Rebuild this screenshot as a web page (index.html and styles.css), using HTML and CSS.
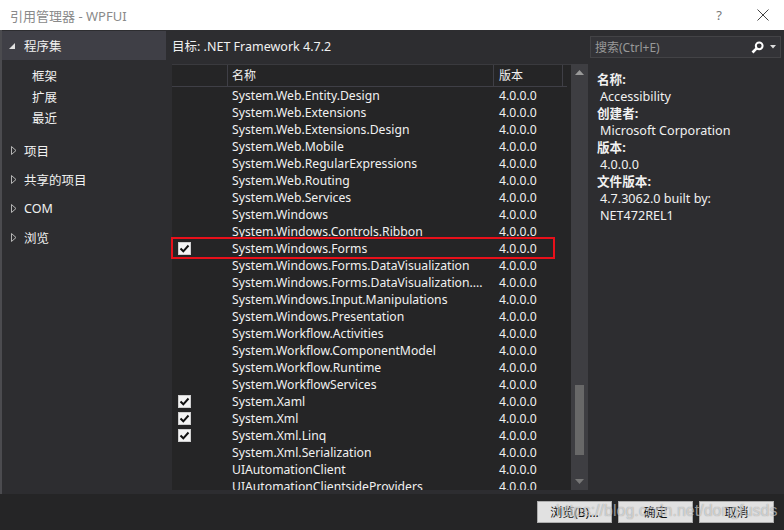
FILE: index.html
```html
<!DOCTYPE html>
<html>
<head>
<meta charset="utf-8">
<title>引用管理器 - WPFUI</title>
<link rel="stylesheet" href="styles.css">
</head>
<body>
<div class="window">

 <div class="titlebar">
  <span class="title">引用管理器 - WPFUI</span>
  <span class="help">?</span>
  <svg class="close" width="12" height="12" viewBox="0 0 12 12"><path d="M0.5 0.5L11.5 11.5M11.5 0.5L0.5 11.5" stroke="#444" stroke-width="1"/></svg>
 </div>

 <div class="main">
  <div class="nav">
   <div class="navhead"><svg class="tri-open" width="6" height="6" viewBox="0 0 6 6"><polygon points="6,0 6,6 0,6" fill="#e0e0e0"/></svg>程序集</div>
   <div class="sub first">框架</div>
   <div class="sub">扩展</div>
   <div class="sub">最近</div>
   <div class="group gfirst"><svg class="tri" width="6" height="9" viewBox="0 0 6 9"><polygon points="0.5,0.5 5,4.5 0.5,8.5" fill="none" stroke="#b4b4b4"/></svg>项目</div>
   <div class="group"><svg class="tri" width="6" height="9" viewBox="0 0 6 9"><polygon points="0.5,0.5 5,4.5 0.5,8.5" fill="none" stroke="#b4b4b4"/></svg>共享的项目</div>
   <div class="group"><svg class="tri" width="6" height="9" viewBox="0 0 6 9"><polygon points="0.5,0.5 5,4.5 0.5,8.5" fill="none" stroke="#b4b4b4"/></svg>COM</div>
   <div class="group"><svg class="tri" width="6" height="9" viewBox="0 0 6 9"><polygon points="0.5,0.5 5,4.5 0.5,8.5" fill="none" stroke="#b4b4b4"/></svg>浏览</div>
  </div>

  <div class="center">
   <div class="target">目标: .NET Framework 4.7.2</div>
   <div class="listbox">
    <div class="list">
     <div class="head">
      <span class="c-chk"></span>
      <span class="c-name">名称</span>
      <span class="c-ver">版本</span>
     </div>
     <div class="rows">
      <div class="row"><span class="c-chk"></span><span class="c-name">System.Web.Entity.Design</span><span class="c-ver">4.0.0.0</span></div>
      <div class="row"><span class="c-chk"></span><span class="c-name">System.Web.Extensions</span><span class="c-ver">4.0.0.0</span></div>
      <div class="row"><span class="c-chk"></span><span class="c-name">System.Web.Extensions.Design</span><span class="c-ver">4.0.0.0</span></div>
      <div class="row"><span class="c-chk"></span><span class="c-name">System.Web.Mobile</span><span class="c-ver">4.0.0.0</span></div>
      <div class="row"><span class="c-chk"></span><span class="c-name">System.Web.RegularExpressions</span><span class="c-ver">4.0.0.0</span></div>
      <div class="row"><span class="c-chk"></span><span class="c-name">System.Web.Routing</span><span class="c-ver">4.0.0.0</span></div>
      <div class="row"><span class="c-chk"></span><span class="c-name">System.Web.Services</span><span class="c-ver">4.0.0.0</span></div>
      <div class="row"><span class="c-chk"></span><span class="c-name">System.Windows</span><span class="c-ver">4.0.0.0</span></div>
      <div class="row"><span class="c-chk"></span><span class="c-name">System.Windows.Controls.Ribbon</span><span class="c-ver">4.0.0.0</span></div>
      <div class="row"><span class="c-chk"><span class="box"><svg width="11" height="11" viewBox="0 0 11 11"><path d="M1.5 5.5L4.3 8.3L9.5 2.5" fill="none" stroke="#111" stroke-width="2"/></svg></span></span><span class="c-name">System.Windows.Forms</span><span class="c-ver">4.0.0.0</span></div>
      <div class="row"><span class="c-chk"></span><span class="c-name">System.Windows.Forms.DataVisualization</span><span class="c-ver">4.0.0.0</span></div>
      <div class="row"><span class="c-chk"></span><span class="c-name">System.Windows.Forms.DataVisualization....</span><span class="c-ver">4.0.0.0</span></div>
      <div class="row"><span class="c-chk"></span><span class="c-name">System.Windows.Input.Manipulations</span><span class="c-ver">4.0.0.0</span></div>
      <div class="row"><span class="c-chk"></span><span class="c-name">System.Windows.Presentation</span><span class="c-ver">4.0.0.0</span></div>
      <div class="row"><span class="c-chk"></span><span class="c-name">System.Workflow.Activities</span><span class="c-ver">4.0.0.0</span></div>
      <div class="row"><span class="c-chk"></span><span class="c-name">System.Workflow.ComponentModel</span><span class="c-ver">4.0.0.0</span></div>
      <div class="row"><span class="c-chk"></span><span class="c-name">System.Workflow.Runtime</span><span class="c-ver">4.0.0.0</span></div>
      <div class="row"><span class="c-chk"></span><span class="c-name">System.WorkflowServices</span><span class="c-ver">4.0.0.0</span></div>
      <div class="row"><span class="c-chk"><span class="box"><svg width="11" height="11" viewBox="0 0 11 11"><path d="M1.5 5.5L4.3 8.3L9.5 2.5" fill="none" stroke="#111" stroke-width="2"/></svg></span></span><span class="c-name">System.Xaml</span><span class="c-ver">4.0.0.0</span></div>
      <div class="row"><span class="c-chk"><span class="box"><svg width="11" height="11" viewBox="0 0 11 11"><path d="M1.5 5.5L4.3 8.3L9.5 2.5" fill="none" stroke="#111" stroke-width="2"/></svg></span></span><span class="c-name">System.Xml</span><span class="c-ver">4.0.0.0</span></div>
      <div class="row"><span class="c-chk"><span class="box"><svg width="11" height="11" viewBox="0 0 11 11"><path d="M1.5 5.5L4.3 8.3L9.5 2.5" fill="none" stroke="#111" stroke-width="2"/></svg></span></span><span class="c-name">System.Xml.Linq</span><span class="c-ver">4.0.0.0</span></div>
      <div class="row"><span class="c-chk"></span><span class="c-name">System.Xml.Serialization</span><span class="c-ver">4.0.0.0</span></div>
      <div class="row"><span class="c-chk"></span><span class="c-name">UIAutomationClient</span><span class="c-ver">4.0.0.0</span></div>
      <div class="row"><span class="c-chk"></span><span class="c-name">UIAutomationClientsideProviders</span><span class="c-ver">4.0.0.0</span></div>
     </div>
     <div class="mark"></div>
    </div>
    <div class="scroll">
     <div class="arrow"><svg width="9" height="5" viewBox="0 0 9 5"><polygon points="0,5 4.5,0 9,5" fill="#999"/></svg></div>
     <div class="track"><div class="thumb"></div></div>
     <div class="arrow"><svg width="9" height="5" viewBox="0 0 9 5"><polygon points="0,0 4.5,5 9,0" fill="#777"/></svg></div>
    </div>
   </div>
  </div>

  <div class="side">
   <div class="search">
    <span class="hint">搜索(Ctrl+E)</span>
    <svg class="lens" width="13" height="13" viewBox="0 0 13 13"><circle cx="8.2" cy="4.8" r="3.4" fill="none" stroke="#fff" stroke-width="2"/><path d="M5.8 7.2L1.5 11.5" stroke="#fff" stroke-width="2.6"/></svg>
    <svg class="drop" width="6" height="4" viewBox="0 0 6 4"><polygon points="0,0 6,0 3,3.5" fill="#ddd"/></svg>
   </div>
   <dl class="info">
    <dt>名称:</dt><dd>Accessibility</dd>
    <dt>创建者:</dt><dd>Microsoft Corporation</dd>
    <dt>版本:</dt><dd>4.0.0.0</dd>
    <dt>文件版本:</dt><dd>4.7.3062.0 built by:</dd>
    <dd>NET472REL1</dd>
   </dl>
  </div>
 </div>

 <div class="footer">
  <button class="btn">浏览(B)...</button>
  <button class="btn">确定</button>
  <button class="btn">取消</button>
  <span class="watermark">https://blog.csdn.net/dongfusds</span>
 </div>

</div>
</body>
</html>
```

FILE: styles.css
```css
body {
 margin:0;
 background:#252526;
 font-family:"Noto Sans","Noto Sans CJK SC",sans-serif;
 font-size:12px;
 color:#f1f1f1;
}
.window {
 width:784px;
 height:530px;
 overflow:hidden;
}
.titlebar {
 height:30px;
 background:#fff;
 display:flex;
 align-items:center;
}
.title {
 padding-left:10px;
 color:#8a8a8a;
 font-size:13px;
}
.help {
 margin-left:auto;
 margin-right:35px;
 color:#777;
 font-size:13px;
}
.close {
 margin-right:15px;
}
.main {
 height:464px;
 display:flex;
 background:#2d2d30;
 border-left:2px solid #4b4b4f;
}
.nav {
 width:164px;
 font-size:12.5px;
}
.navhead {
 height:29px;
 margin-top:1px;
 background:#3f3f46;
 display:flex;
 align-items:center;
 padding-left:7px;
}
.tri-open {
 margin-right:9px;
 margin-top:1px;
}
.sub {
 padding-left:30px;
 line-height:21px;
}
.sub.first {
 margin-top:6px;
}
.group {
 display:flex;
 align-items:center;
 height:29px;
 padding-left:9px;
}
.group.gfirst {
 margin-top:7px;
}
.tri {
 margin-right:7px;
}
.center {
 width:416px;
 padding-left:6px;
 display:flex;
 flex-direction:column;
}
.target {
 height:34px;
 line-height:34px;
 font-size:12.5px;
}
.listbox {
 height:426px;
 display:flex;
}
.list {
 flex:1;
 position:relative;
 background:#252526;
 border-top:1px solid #3a3a3e;
}
.head {
 display:flex;
 height:21px;
 line-height:21px;
 border-bottom:1px solid #3f3f46;
 margin-right:4px;
}
.head span {
 border-right:1px solid #3f3f46;
}
.c-chk {
 width:56px;
 flex:none;
 box-sizing:border-box;
 padding-left:6px;
 display:flex;
 align-items:center;
}
.c-name {
 width:266px;
 flex:none;
 box-sizing:border-box;
 padding-left:4px;
 white-space:nowrap;
 overflow:hidden;
}
.c-ver {
 width:69px;
 flex:none;
 box-sizing:border-box;
 padding-left:5px;
}
.rows {
 height:403px;
 overflow:hidden;
 font-size:12.2px;
}
.row {
 display:flex;
 height:17px;
 line-height:17px;
}
.box {
 width:13px;
 height:13px;
 box-sizing:border-box;
 background:#f4f4f4;
 border:1px solid #cfcfcf;
 display:flex;
 align-items:center;
 justify-content:center;
}
.mark {
 position:absolute;
 left:-1px;
 top:172px;
 width:384px;
 height:22px;
 box-sizing:border-box;
 border:2px solid #e8101a;
}
.scroll {
 width:17px;
 background:#3e3e42;
 display:flex;
 flex-direction:column;
}
.arrow {
 height:17px;
 display:flex;
 align-items:center;
 justify-content:center;
}
.track {
 flex:1;
}
.thumb {
 width:9px;
 height:70px;
 margin:304px 0 0 4px;
 background:#686868;
}
.side {
 width:196px;
}
.search {
 height:22px;
 margin:6px 3px 0 2px;
 box-sizing:border-box;
 background:#333337;
 border:1px solid #434346;
 display:flex;
 align-items:center;
 padding-left:4px;
}
.hint {
 color:#999;
 flex:1;
}
.lens {
 margin-right:6px;
}
.drop {
 margin-right:4px;
}
.info {
 margin:13px 0 0 9px;
 line-height:17px;
 font-size:12.6px;
}
.info dt {
 font-weight:bold;
}
.info dd {
 margin-left:3px;
}
.footer {
 height:36px;
 background:#252526;
 display:flex;
 justify-content:flex-end;
 align-items:flex-start;
 gap:6px;
 padding:7px 10px 0 0;
 box-sizing:border-box;
 position:relative;
}
.btn {
 width:75px;
 height:22px;
 background:#e1e1e1;
 border:1px solid #adadad;
 color:#111;
 font-family:"Noto Sans","Noto Sans CJK SC",sans-serif;
 font-size:12px;
 padding:0;
}
.watermark {
 position:absolute;
 left:556px;
 top:8px;
 font-family:"Liberation Sans",sans-serif;
 font-size:16px;
 color:rgba(255,255,255,0.55);
 text-shadow:0 0 1px rgba(0,0,0,0.4);
 pointer-events:none;
}
```
